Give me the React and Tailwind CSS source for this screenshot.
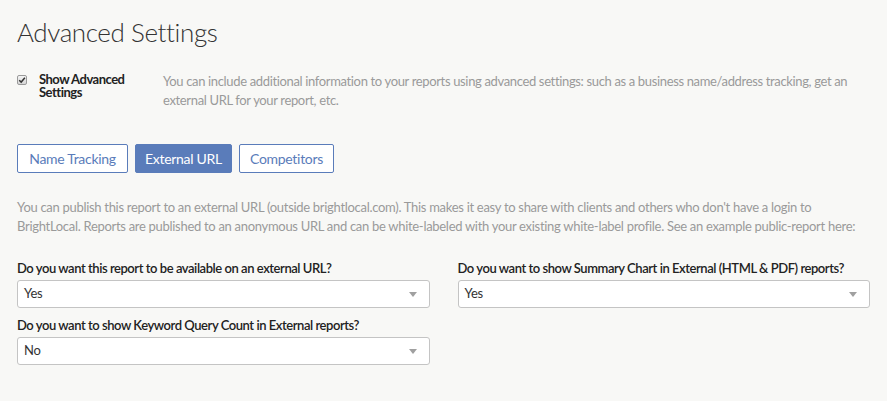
import { useState } from "react"

const Select = ({ value }) => (
  <div className="flex items-center justify-between h-[28px] bg-white border border-[#c4c4c4] rounded-[3px] pl-[6px] pr-[12px] text-[13px] text-[#333] tracking-[-0.3px]">
    <span>{value}</span>
    <span className="w-0 h-0 border-l-[4px] border-r-[4px] border-t-[5px] border-l-transparent border-r-transparent border-t-[#a0a0a0]" />
  </div>
)

const Field = ({ label, value }) => (
  <div className="flex flex-col">
    <label className="text-[13px] font-semibold text-[#222] leading-[18px] tracking-[-0.45px] mb-[3px] whitespace-nowrap">{label}</label>
    <Select value={value} />
  </div>
)

export default function App() {
  const [tab, setTab] = useState("External URL")
  const [checked, setChecked] = useState(true)
  const tabs = [
    { name: "Name Tracking", w: "w-[111px]" },
    { name: "External URL", w: "w-[97px]" },
    { name: "Competitors", w: "w-[95px]" },
  ]

  return (
    <div className="min-h-[401px] bg-[#f8f8f6] px-[17px] pt-[14px] font-['Source_Sans_Pro','Lato',sans-serif]">
      <h1 className="text-[26px] font-light text-[#333] leading-[36px] tracking-[-0.4px]">Advanced Settings</h1>

      <div className="flex mt-[23px]">
        <div className="flex w-[146px] shrink-0">
          <button
            onClick={() => setChecked(!checked)}
            className="w-[10px] h-[10px] mt-[2px] rounded-[2px] border border-[#9a9a9a] bg-gradient-to-b from-[#f4f4f4] to-[#d6d6d6] flex items-center justify-center"
          >
            {checked && (
              <svg viewBox="0 0 10 10" className="w-[8px] h-[8px]">
                <path d="M1.5 5.2 L4 7.6 L8.6 2.2" fill="none" stroke="#333" strokeWidth="1.8" />
              </svg>
            )}
          </button>
          <span className="ml-[12px] text-[13px] font-bold text-[#222] leading-[13px] tracking-[-0.5px] w-[100px]">Show Advanced Settings</span>
        </div>
        <p className="text-[13px] text-[#9a9a9a] leading-[19px] tracking-[-0.35px] mt-[-1px]">
          You can include additional information to your reports using advanced settings: such as a business name/address tracking, get an external URL for your report, etc.
        </p>
      </div>

      <div className="flex gap-[7px] mt-[34px]">
        {tabs.map((t) => (
          <button
            key={t.name}
            onClick={() => setTab(t.name)}
            className={
              t.name === tab
                ? `${t.w} h-[29px] rounded-[2px] border border-[#5a7cba] bg-[#5a7cba] text-white text-[14px] tracking-[-0.3px]`
                : `${t.w} h-[29px] rounded-[2px] border border-[#5a7cba] bg-white text-[#5a7cba] text-[14px] tracking-[-0.3px]`
            }
          >
            {t.name}
          </button>
        ))}
      </div>

      <p className="mt-[25px] text-[13px] text-[#9a9a9a] leading-[19px] tracking-[-0.3px] w-[845px]">
        You can publish this report to an external URL (outside brightlocal.com). This makes it easy to share with clients and others who don't have a login to BrightLocal. Reports are published to an anonymous URL and can be white-labeled with your existing white-label profile. See an example public-report here:
      </p>

      <div className="grid grid-cols-2 gap-x-[28px] gap-y-[8px] mt-[23px] w-[853px]">
        <Field label="Do you want this report to be available on an external URL?" value="Yes" />
        <Field label="Do you want to show Summary Chart in External (HTML & PDF) reports?" value="Yes" />
        <Field label="Do you want to show Keyword Query Count in External reports?" value="No" />
      </div>
    </div>
  )
}
